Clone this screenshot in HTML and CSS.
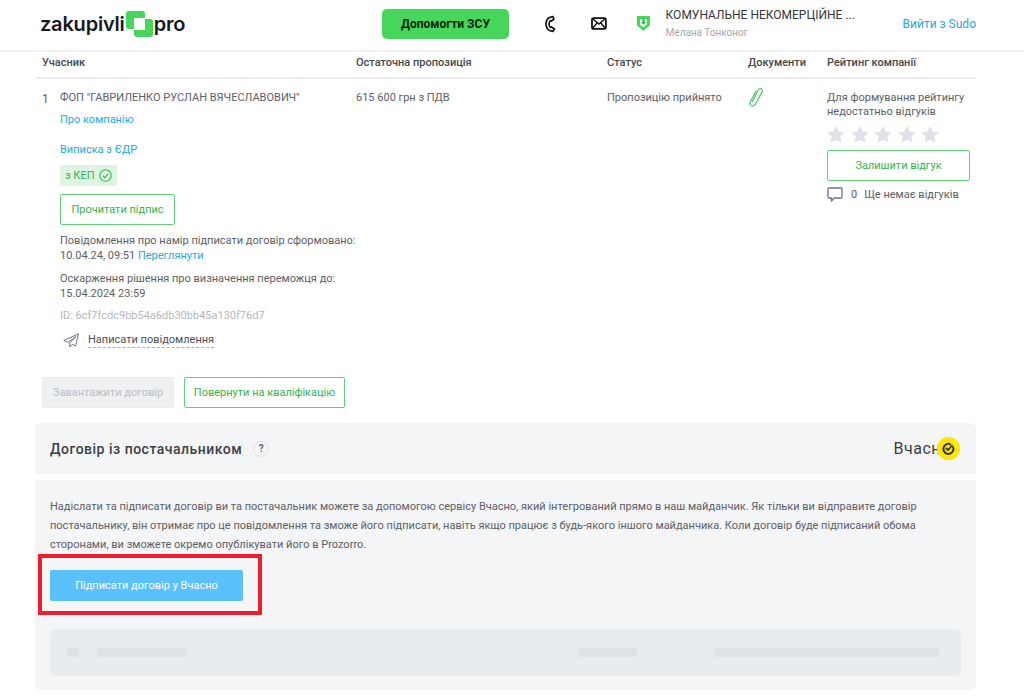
FILE: index.html
```html
<!DOCTYPE html>
<html lang="uk">
<head>
    <meta charset="UTF-8">
    <meta name="viewport" content="width=device-width, initial-scale=1.0">
    <title>Zakupivli Pro</title>
    <link rel="stylesheet" href="styles.css">
</head>
<body>
    <header class="header">
        <div class="logo">
            <span>zakupivli</span>
            <svg class="logo-mark" width="27" height="26" viewBox="0 0 27 26">
                <path d="M3 0h13a3 3 0 0 1 3 3v4H8v11H3a3 3 0 0 1-3-3V3a3 3 0 0 1 3-3z" fill="#47d65c"/>
                <path d="M24 26H11a3 3 0 0 1-3-3v-4h11V8h5a3 3 0 0 1 3 3v12a3 3 0 0 1-3 3z" fill="#47d65c"/>
            </svg>
            <span>pro</span>
        </div>
        <a class="help-btn">Допомогти ЗСУ</a>
        <svg class="icon-phone" width="12" height="18" viewBox="0 0 12 18">
            <path d="M9 1.5 5.5 2.5C3 4 2 6.500 2 9s1 5 3.500 6.500l3.500 1 1.500-2.500-3-2-1 .5C5.500 11.500 5 10 5 9s.5-2.500 1.500-3.500l1 .5 2.500-2z" fill="none" stroke="#111" stroke-width="1.700" stroke-linejoin="round"/>
        </svg>
        <svg class="icon-mail" width="16" height="13" viewBox="0 0 16 13">
            <rect x="1" y="1" width="14" height="11" rx="1.500" fill="none" stroke="#111" stroke-width="1.800"/>
            <path d="M1.500 1.500 8 7l6.500-5.500M1.500 11.500 6 6M14.500 11.500 10 6" fill="none" stroke="#111" stroke-width="1.400"/>
        </svg>
        <svg class="icon-shield" width="13" height="15" viewBox="0 0 13 15">
            <path d="M0 0h13v9.500L6.500 15 0 9.500z" fill="#47d65c"/>
            <path d="M3 3h7v5.500l-3.500 3-3.500-3z" fill="#e8f9eb"/>
            <path d="M5.500 3h2v3h1.200L6.500 8.800 4.300 6h1.200z" fill="#2fae47"/>
        </svg>
        <div class="org">
            <div class="org-name">КОМУНАЛЬНЕ НЕКОМЕРЦІЙНЕ ...</div>
            <div class="org-user">Мелана Тонконог</div>
        </div>
        <a class="link logout">Вийти з Sudo</a>
    </header>

    <main class="content">
        <div class="table-row table-head">
            <div>Учасник</div>
            <div>Остаточна пропозиція</div>
            <div>Статус</div>
            <div>Документи</div>
            <div>Рейтинг компанії</div>
        </div>

        <div class="table-row table-body">
            <div class="participant">
                <div class="participant-num">1</div>
                <div class="participant-info">
                    <div class="participant-name">ФОП "ГАВРИЛЕНКО РУСЛАН ВЯЧЕСЛАВОВИЧ"</div>
                    <a class="link about">Про компанію</a>
                    <a class="link extract">Виписка з ЄДР</a>
                    <div class="kep-badge">
                        з КЕП
                        <svg width="13" height="13" viewBox="0 0 13 13">
                            <circle cx="6.500" cy="6.500" r="5.700" fill="none" stroke="#36b24d" stroke-width="1.100"/>
                            <path d="M3.800 6.600 5.800 8.600 9.300 4.700" fill="none" stroke="#36b24d" stroke-width="1.100"/>
                        </svg>
                    </div>
                    <a class="btn btn-outline read-sign">Прочитати підпис</a>
                    <p class="note">Повідомлення про намір підписати договір сформовано:<br>10.04.24, 09:51 <a class="link">Переглянути</a></p>
                    <p class="note">Оскарження рішення про визначення переможця до:<br>15.04.2024 23:59</p>
                    <p class="note note-id">ID: 6cf7fcdc9bb54a6db30bb45a130f76d7</p>
                    <div class="write-msg">
                        <svg width="16" height="15" viewBox="0 0 16 15">
                            <path d="M15.500.8 .8 7.500 5 9.300 13 3.500 6.500 10.200 7 14 9.200 11.300 12.500 13z" fill="none" stroke="#6d7480" stroke-width="1" stroke-linejoin="round"/>
                        </svg>
                        <span>Написати повідомлення</span>
                    </div>
                </div>
            </div>
            <div>615 600 грн з ПДВ</div>
            <div>Пропозицію прийнято</div>
            <div>
                <svg class="icon-clip" width="16" height="20" viewBox="0 0 16 20">
                    <path d="M4.500 14.500 10 3.500c.8-1.600 2-2.200 3.200-1.600s1.500 1.900.7 3.500L7.500 17c-1 1.800-2.600 2.500-4 1.800S1.500 16.500 2.500 14.500L8 4" fill="none" stroke="#47c763" stroke-width="1.200" stroke-linecap="round"/>
                </svg>
            </div>
            <div class="rating">
                <p class="rating-text">Для формування рейтингу недостатньо відгуків</p>
                <div class="stars">
                    <svg width="18" height="17" viewBox="0 0 18 17"><path d="M9 0l2.700 5.600 6.100.8-4.500 4.200 1.200 6L9 13.700 3.500 16.600l1.200-6L.2 6.400l6.100-.8z" fill="#dfe2e8"/></svg>
                    <svg width="18" height="17" viewBox="0 0 18 17"><path d="M9 0l2.700 5.600 6.100.8-4.500 4.200 1.200 6L9 13.700 3.500 16.600l1.200-6L.2 6.400l6.100-.8z" fill="#dfe2e8"/></svg>
                    <svg width="18" height="17" viewBox="0 0 18 17"><path d="M9 0l2.700 5.600 6.100.8-4.500 4.200 1.200 6L9 13.700 3.500 16.600l1.200-6L.2 6.400l6.100-.8z" fill="#dfe2e8"/></svg>
                    <svg width="18" height="17" viewBox="0 0 18 17"><path d="M9 0l2.700 5.600 6.100.8-4.500 4.200 1.200 6L9 13.700 3.500 16.600l1.200-6L.2 6.400l6.100-.8z" fill="#dfe2e8"/></svg>
                    <svg width="18" height="17" viewBox="0 0 18 17"><path d="M9 0l2.700 5.600 6.100.8-4.500 4.200 1.200 6L9 13.700 3.500 16.600l1.200-6L.2 6.400l6.100-.8z" fill="#dfe2e8"/></svg>
                </div>
                <a class="btn btn-outline review-btn">Залишити відгук</a>
                <div class="reviews">
                    <svg width="16" height="15" viewBox="0 0 16 15">
                        <path d="M2 1h12a1 1 0 0 1 1 1v8a1 1 0 0 1-1 1H7l-2.500 3v-3H2a1 1 0 0 1-1-1V2a1 1 0 0 1 1-1z" fill="none" stroke="#68758c" stroke-width="1.300" stroke-linejoin="round"/>
                    </svg>
                    <span class="reviews-count">0</span>
                    <span>Ще немає відгуків</span>
                </div>
            </div>
        </div>

        <div class="actions">
            <a class="btn btn-disabled">Завантажити договір</a>
            <a class="btn btn-outline">Повернути на кваліфікацію</a>
        </div>

        <section class="panel-head">
            <h2>Договір із постачальником</h2>
            <span class="hint">?</span>
            <div class="vchasno">
                <span>Вчасн</span>
                <svg width="23" height="23" viewBox="0 0 23 23">
                    <circle cx="11.500" cy="11.500" r="11.500" fill="#ffe600"/>
                    <path d="M15.800 9.500a5 5 0 1 1-2-2" fill="none" stroke="#333" stroke-width="2"/>
                    <path d="M8.800 11 11 13 15.500 8" fill="none" stroke="#333" stroke-width="1.800"/>
                </svg>
            </div>
        </section>

        <section class="panel-body">
            <p class="panel-text">Надіслати та підписати договір ви та постачальник можете за допомогою сервісу Вчасно, який інтегрований прямо в наш майданчик. Як тільки ви відправите договір постачальнику, він отримає про це повідомлення та зможе його підписати, навіть якщо працює з будь-якого іншого майданчика. Коли договір буде підписаний обома сторонами, ви зможете окремо опублікувати його в Prozorro.</p>
            <div class="sign-wrap">
                <a class="btn btn-blue">Підписати договір у Вчасно</a>
                <div class="highlight"></div>
            </div>
            <div class="skeleton">
                <span class="pill pill-num"></span>
                <span class="pill pill-name"></span>
                <span class="pill pill-mid"></span>
                <span class="pill pill-long"></span>
            </div>
        </section>
    </main>
</body>
</html>
```

FILE: styles.css
```css
* {
    box-sizing: border-box;
}
body {
    margin: 0;
    height: 700px;
    overflow: hidden;
    background-color: #fff;
    font-family: Roboto, "Liberation Sans", sans-serif;
    font-size: 11px;
    line-height: 14px;
    color: #5c6066;
}
.link {
    color: #26a9e0;
}

/* Header */
.header {
    display: flex;
    align-items: center;
    height: 52px;
    padding: 0 48px 3px 40px;
    border-bottom: 2px solid #f1f2f4;
}
.logo {
    display: flex;
    align-items: center;
    width: 345px;
    font-family: Inter, sans-serif;
    font-size: 20px;
    font-weight: 600;
    letter-spacing: -.2px;
    color: #16181c;
}
.logo-mark {
    margin: 0 1px;
}
.help-btn {
    width: 128px;
    height: 30px;
    margin-right: 35px;
    background-color: #47d65c;
    border-radius: 5px;
    color: #10240f;
    font-size: 12px;
    font-weight: 700;
    line-height: 30px;
    text-align: center;
}
.icon-phone {
    margin-right: 35px;
}
.icon-mail {
    margin-right: 30px;
}
.icon-shield {
    margin-right: 16px;
}
.org {
    width: 239px;
}
.org-name {
    font-size: 12px;
    line-height: 16px;
    color: #33363a;
}
.org-user {
    margin-top: 3px;
    font-size: 10px;
    line-height: 14px;
    color: #a4a8ae;
}
.logout {
    font-size: 12px;
    white-space: nowrap;
}

/* Table */
.content {
    margin: 0 48px 0 35px;
}
.table-row {
    display: grid;
    grid-template-columns: 314px 251px 141px 79px 1fr;
    padding-left: 7px;
}
.table-head {
    height: 27px;
    padding-top: 3px;
    border-bottom: 2px solid #eceef2;
    font-weight: 500;
    color: #44474c;
    line-height: 15px;
}
.table-body {
    padding-top: 12px;
}
.participant {
    display: flex;
}
.participant-num {
    width: 18px;
    font-size: 12px;
    line-height: 16px;
}
.participant-info {
    display: flex;
    flex-direction: column;
    align-items: flex-start;
}
.about {
    margin-top: 8px;
}
.extract {
    margin-top: 16px;
}
.kep-badge {
    display: flex;
    align-items: center;
    gap: 5px;
    height: 21px;
    margin-top: 8px;
    padding: 0 5px;
    background-color: #dff5e4;
    border-radius: 2px;
    color: #36b24d;
}
.btn {
    display: block;
    height: 31px;
    border-radius: 2px;
    line-height: 29px;
    text-align: center;
}
.btn-outline {
    border: 1px solid #5fd077;
    color: #36b24d;
}
.read-sign {
    width: 115px;
    margin-top: 8px;
}
.note {
    margin: 8px 0 0;
    line-height: 15px;
}
.read-sign + .note {
    margin-top: 8px;
}
.note-id {
    margin-top: 7px;
    color: #b4b7bc;
}
.write-msg {
    display: flex;
    align-items: center;
    gap: 9px;
    margin-top: 10px;
}
.write-msg svg {
    margin-left: 3px;
}
.write-msg span {
    border-bottom: 1px dashed #a9adb3;
    color: #4c5055;
}
.icon-clip {
    display: block;
    margin-top: -4px;
}
.rating-text {
    width: 140px;
    margin: 0;
}
.stars {
    display: flex;
    gap: 5.500px;
    margin-top: 7px;
    height: 17px;
}
.review-btn {
    width: 143px;
    margin-top: 7px;
}
.reviews {
    display: flex;
    align-items: center;
    margin-top: 6px;
}
.reviews-count {
    margin: 0 7px 0 8px;
}

/* Buttons under table */
.actions {
    display: flex;
    gap: 10px;
    margin: 29px 0 15px 7px;
}
.btn-disabled {
    width: 132px;
    background-color: #eef0f2;
    border: 1px solid #e9ebee;
    color: #b9bdc4;
}
.actions .btn-outline {
    width: 161px;
}

/* Contract panel */
.panel-head {
    display: flex;
    align-items: center;
    height: 51px;
    padding: 0 15px;
    background-color: #f4f5f7;
    border-radius: 6px 6px 0 0;
}
.panel-head h2 {
    margin: 0;
    font-size: 14px;
    font-weight: 500;
    letter-spacing: .5px;
    color: #3c3f44;
}
.hint {
    width: 16px;
    height: 16px;
    margin-left: 11px;
    border: 1px solid #e0e3e8;
    border-radius: 50%;
    font-size: 10px;
    font-weight: 700;
    line-height: 14px;
    text-align: center;
    color: #62666c;
}
.vchasno {
    display: flex;
    align-items: center;
    margin-left: auto;
    margin-right: 1px;
    font-size: 16px;
    letter-spacing: .5px;
    color: #3c3f44;
}
.vchasno svg {
    margin-left: -4px;
}
.panel-body {
    height: 210px;
    margin-top: 6px;
    padding: 17px 15px 0;
    background-color: #f4f5f7;
    border-radius: 0 0 6px 6px;
}
.panel-text {
    margin: 0;
    line-height: 19px;
    color: #5c6066;
}
.sign-wrap {
    position: relative;
    width: 193px;
    margin-top: 16px;
}
.btn-blue {
    background-color: #5ac1fc;
    color: #fff;
    line-height: 31px;
}
.highlight {
    position: absolute;
    top: -16px;
    left: -12px;
    width: 224px;
    height: 61px;
    border: 4px solid #ed1c2e;
}
.skeleton {
    display: flex;
    align-items: center;
    width: 911px;
    height: 47px;
    margin-top: 28px;
    padding-left: 16px;
    background-color: #e9ecef;
    border-radius: 6px;
}
.pill {
    height: 9px;
    background-color: #dee1e5;
    border-radius: 5px;
}
.pill-num {
    width: 14px;
}
.pill-name {
    width: 90px;
    margin-left: 16px;
}
.pill-mid {
    width: 61px;
    margin-left: 391px;
}
.pill-long {
    width: 227px;
    margin-left: 75px;
}
```
